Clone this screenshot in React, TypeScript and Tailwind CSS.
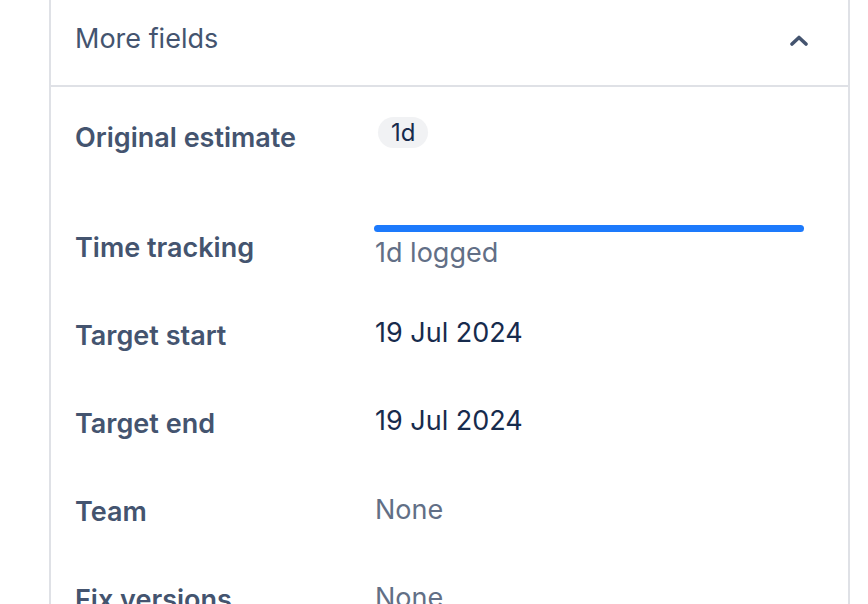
const font = { fontFamily: 'Inter, "Noto Sans", sans-serif' };

function ChevronUp() {
  return (
    <svg width="20" height="12" viewBox="0 0 20 12" fill="none">
      <path d="M3 10L10 3.5L17 10" stroke="#44546f" strokeWidth="3.6" strokeLinecap="round" strokeLinejoin="round" />
    </svg>
  );
}

interface RowProps {
  label: string;
  height: string;
  children: React.ReactNode;
}

function FieldRow({ label, height, children }: RowProps) {
  return (
    <div className={`flex ${height}`}>
      <div className="w-[300px] shrink-0 text-[27px] leading-[32px] font-semibold text-[#44546f]">{label}</div>
      <div className="flex-1">{children}</div>
    </div>
  );
}

export default function App() {
  return (
    <div className="w-[868px] h-[604px] overflow-hidden bg-white pl-[49px] pr-[18px]" style={font}>
      <div className="h-full border-x-2 border-[#dfe1e6]">
        {/* cabeçalho */}
        <div className="h-[87px] border-b-2 border-[#dfe1e6] flex items-center justify-between pl-[24px] pr-[39px] pb-[6px]">
          <span className="text-[27px] text-[#44546f]">More fields</span>
          <ChevronUp />
        </div>

        <div className="pl-[24px] pt-[35px]">
          <FieldRow label="Original estimate" height="h-[110px]">
            <div className="-mt-[5px] ml-[3px] inline-flex h-[31px] px-[13px] items-center rounded-full bg-[#f1f2f4] text-[24px] text-[#172b4d]">1d</div>
          </FieldRow>

          <FieldRow label="Time tracking" height="h-[88px]">
            <div className="-mt-[7px] pr-[44px]">
              <div className="-ml-px h-[7px] rounded-full bg-[#1d7afc]" />
              <div className="mt-[5px] text-[27px] leading-[32px] text-[#626f86]">1d logged</div>
            </div>
          </FieldRow>

          <FieldRow label="Target start" height="h-[88px]">
            <div className="-mt-[3px] text-[27px] leading-[32px] text-[#172b4d]">19 Jul 2024</div>
          </FieldRow>

          <FieldRow label="Target end" height="h-[88px]">
            <div className="-mt-[3px] text-[27px] leading-[32px] text-[#172b4d]">19 Jul 2024</div>
          </FieldRow>

          <FieldRow label="Team" height="h-[88px]">
            <div className="-mt-[2px] text-[27px] leading-[32px] text-[#626f86]">None</div>
          </FieldRow>

          <FieldRow label="Fix versions" height="h-[88px]">
            <div className="-mt-[2px] text-[27px] leading-[32px] text-[#626f86]">None</div>
          </FieldRow>
        </div>
      </div>
    </div>
  );
}
